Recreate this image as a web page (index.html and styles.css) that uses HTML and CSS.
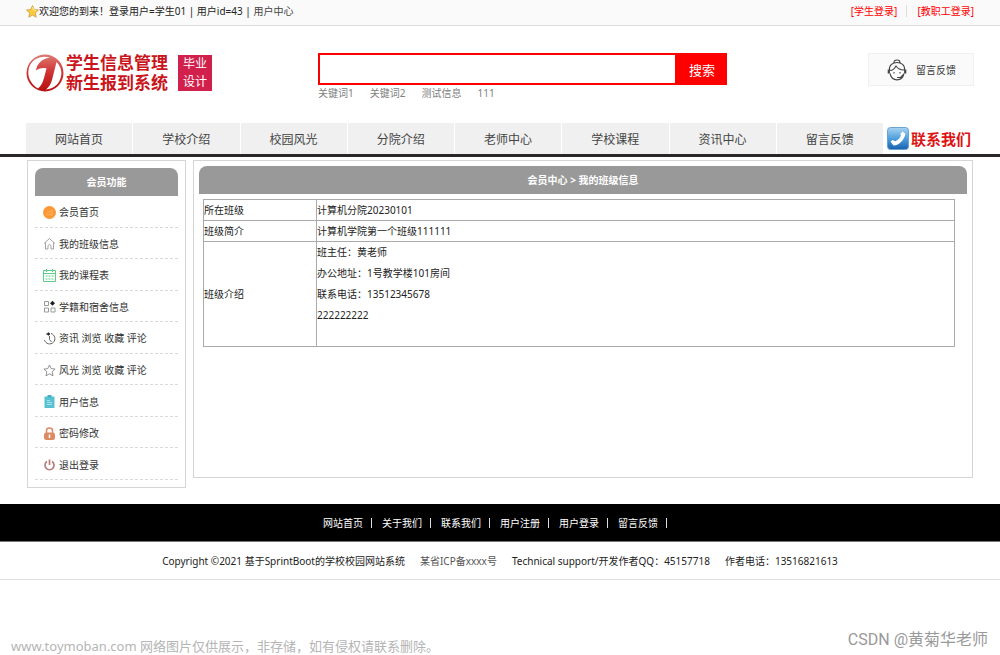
FILE: index.html
```html
<!DOCTYPE html>
<html lang="zh-CN">
<head>
<meta charset="utf-8">
<title>会员中心 - 我的班级信息</title>
<link rel="stylesheet" href="styles.css">
</head>
<body>
<div class="topbar">
  <div class="welcome">
    <svg class="star" viewBox="0 0 13 13"><path d="M6.5 .6l1.8 3.9 4.2.5-3.1 2.9.8 4.3-3.7-2.1-3.7 2.1.8-4.3L.5 5l4.2-.5z" fill="#fbcb3e" stroke="#c99a3c" stroke-width=".8"/><path d="M6.5 2l1 3.1 2.8.4" fill="none" stroke="#fff0a0"/></svg>
    <span>欢迎您的到来！登录用户=学生01 | 用户id=43 | <a href="#">用户中心</a></span>
  </div>
  <div class="logins"><a href="#">[学生登录]</a><a href="#">[教职工登录]</a></div>
</div>

<header class="header">
  <a class="logo" href="#">
    <svg class="logo-mark" viewBox="0 0 38 38">
      <defs><linearGradient id="red" x1="0" y1="0" x2="0" y2="1"><stop offset="0" stop-color="#dd7a74"/><stop offset=".5" stop-color="#cf3030"/><stop offset="1" stop-color="#b5100f"/></linearGradient></defs>
      <circle cx="19" cy="19" r="18.500" fill="url(#red)"/>
      <path d="M24 3.500C15 .8 5.500 5 3 13.500 .5 22 4.500 30 12 34.500 15 32 16.500 29 18 24L20.500 14.500C17 13.500 14 14 10 16.500 11 10 15 5 24 3.500Z" fill="#fff"/>
      <path d="M30.500 8C37 14 37 24 31 30.500 28 33.500 24 35 20 35.500 23 33 25 30 26 26Z" fill="#fff"/>
    </svg>
    <span class="logo-text"><span>学生信息管理</span><span>新生报到系统</span></span>
    <span class="logo-badge"><span>毕业</span><span>设计</span></span>
  </a>
  <div class="search">
    <form class="search-form">
      <input class="search-input" type="text" aria-label="搜索内容">
      <button class="search-button" type="button">搜索</button>
    </form>
    <div class="keywords"><a href="#">关键词1</a><a href="#">关键词2</a><a href="#">测试信息</a><a href="#">111</a></div>
  </div>
  <a class="feedback" href="#">
    <svg class="agent" viewBox="0 0 20 22" fill="none" stroke="#444" stroke-width="1.100"><path d="M7 3.500C7 .2 13 .2 13 3.500M2.500 11C1 1 19 1 17.500 11M3 14.500C5 23 15 23 17 14.500M3 11.500c2.500 0 5-2.500 6-4.500 2 3 4.500 4 8 4M10 18.500h3.500l3-3"/><path d="M1.800 10.500v4M18.200 10.500v4" stroke-width="2.200"/><path d="M7 13v1.500M13 13v1.500"/></svg>
    <span>留言反馈</span>
  </a>
</header>

<nav class="nav">
  <a class="nav-item" href="#">网站首页</a>
  <a class="nav-item" href="#">学校介绍</a>
  <a class="nav-item" href="#">校园风光</a>
  <a class="nav-item" href="#">分院介绍</a>
  <a class="nav-item" href="#">老师中心</a>
  <a class="nav-item" href="#">学校课程</a>
  <a class="nav-item" href="#">资讯中心</a>
  <a class="nav-item" href="#">留言反馈</a>
  <a class="contact" href="#">
    <svg class="phone" viewBox="0 0 22 23"><defs><linearGradient id="blue" x1="0" y1="0" x2="0" y2="1"><stop offset="0" stop-color="#a9d4f2"/><stop offset=".5" stop-color="#4f9fdc"/><stop offset="1" stop-color="#1761ae"/></linearGradient></defs><rect x=".5" y=".5" width="21" height="22" rx="3" fill="url(#blue)" stroke="#6ba3d0"/><path d="M15.500 4.500l2.800 2.200C17.500 12.500 12.500 18.500 6.500 18.500L3.500 14.500l2-1.500 3 1.200C11 13 13.500 10.500 14 8.500l-.8-1.600z" fill="#fff"/></svg>
    <span>联系我们</span>
  </a>
</nav>

<div class="content">
  <aside class="sidebar">
    <h2 class="panel-title">会员功能</h2>
    <ul class="menu">
      <li><a href="#"><svg class="icon" viewBox="0 0 13 13"><circle cx="6.500" cy="6.500" r="6.500" fill="#fb9834"/><path d="M3.500 7.500L9 4v5.500L6 8M5 8v1.500" fill="none" stroke="#ffb564"/></svg>会员首页</a></li>
      <li><a href="#"><svg class="icon" viewBox="0 0 13 13" fill="none" stroke="#999" stroke-width=".9"><path d="M1 6.500l5.500-5 5.500 5M2.500 5.500V12H5V8.500Q6.500 6.500 8 8.500V12h2.500V5.500"/></svg>我的班级信息</a></li>
      <li><a href="#"><svg class="icon" viewBox="0 0 13 13" fill="none" stroke="#5ecb8b"><path d="M.5 1.500h12v11H.5zM.5 4.500h12M3.500 0v3M9.500 0v3"/><path d="M2.500 7h8M2.500 10h8" stroke-dasharray="2 1"/></svg>我的课程表</a></li>
      <li><a href="#"><svg class="icon" viewBox="0 0 13 13" fill="none" stroke="#999"><path d="M1.500 1.500h4v4h-4zM1.500 8h4v4h-4zM8 8h4v4H8z"/><path d="M9.500 .8L12 3.300 9.500 5.800 7 3.300z" fill="#222" stroke="none"/></svg>学籍和宿舍信息</a></li>
      <li><a href="#"><svg class="icon" viewBox="0 0 13 13" fill="none" stroke="#666"><path d="M8 1.500A5.300 5.300 0 1 1 1.500 8M6.500 4v3.500L8.500 10"/><path d="M3.500 2H7M5.500 .5v3" stroke="#222" stroke-width="1.300"/></svg>资讯 浏览 收藏 评论</a></li>
      <li><a href="#"><svg class="icon" viewBox="0 0 13 13"><path d="M6.500 1l1.700 3.600 3.900.5-2.900 2.700.8 4-3.500-2-3.500 2 .8-4L.9 5.100l3.900-.5z" fill="none" stroke="#777" stroke-width=".8"/></svg>风光 浏览 收藏 评论</a></li>
      <li><a href="#"><svg class="icon" viewBox="0 0 13 13"><path d="M1.500 1.500h10V13h-10z" fill="#58c2d2"/><path d="M4.500 0h4v2.500h-4z" fill="#4baec0"/><path d="M4 5.500h3M4 7.500h5M4 9.500h5" stroke="#a8e3ea"/></svg>用户信息</a></li>
      <li><a href="#"><svg class="icon" viewBox="0 0 13 13"><path d="M3.500 6V3.500q0-2.500 3-2.500t3 2.500V6" fill="none" stroke="#dc8a62" stroke-width="1.500"/><rect x="1" y="5.500" width="11" height="7.500" rx="2.500" fill="#dc8a62"/><path d="M6.500 7.500v3.500" stroke="#fff" stroke-width="1.500"/></svg>密码修改</a></li>
      <li><a href="#"><svg class="icon" viewBox="0 0 13 13" fill="none" stroke="#b97b7d" stroke-width="1.700"><path d="M4 3.500a4.500 4.500 0 1 0 5 0M6.500 1.500V7"/></svg>退出登录</a></li>
    </ul>
  </aside>
  <main class="main">
    <h1 class="panel-title">会员中心 &gt; 我的班级信息</h1>
    <table class="info">
      <tr><th scope="row">所在班级</th><td>计算机分院20230101</td></tr>
      <tr><th scope="row">班级简介</th><td>计算机学院第一个班级111111</td></tr>
      <tr><th scope="row">班级介绍</th><td class="detail">班主任：黄老师<br>办公地址：1号教学楼101房间<br>联系电话：13512345678<br>222222222</td></tr>
    </table>
  </main>
</div>

<footer>
  <div class="footer-links"><a href="#">网站首页</a><i></i><a href="#">关于我们</a><i></i><a href="#">联系我们</a><i></i><a href="#">用户注册</a><i></i><a href="#">用户登录</a><i></i><a href="#">留言反馈</a><i></i></div>
  <div class="copyright"><span>Copyright ©2021 基于SprintBoot的学校校园网站系统</span><a href="#">某省ICP备xxxx号</a><span>Technical support/开发作者QQ：45157718</span><span>作者电话：13516821613</span></div>
  <div class="notes"><span class="source">www.toymoban.com 网络图片仅供展示，非存储，如有侵权请联系删除。</span><span class="author">CSDN @黄菊华老师</span></div>
</footer>
</body>
</html>
```
FILE: styles.css
```css
* { box-sizing: border-box; }
body {
  margin: 0;
  background: #fff;
  color: #222;
  font: 10px/20px "Noto Sans", "Noto Sans CJK SC", sans-serif;
}
a { color: inherit; text-decoration: none; }
svg { display: block; flex: none; }

.topbar {
  display: flex;
  justify-content: space-between;
  align-items: center;
  height: 26px;
  padding: 0 26px;
  background: #fafafa;
  border-bottom: 1px solid #ddd;
}
.welcome { display: flex; align-items: center; padding-bottom: 3px; }
.welcome a { color: #444; }
.star { width: 13px; height: 13px; }
.logins { display: flex; align-items: center; color: #f00; line-height: 12px; padding-bottom: 3px; }
.logins a + a { margin-left: 9px; padding-left: 10px; border-left: 1px solid #ddd; }

.header {
  display: flex;
  align-items: flex-start;
  height: 97px;
  padding: 27px 26px 0;
}
.logo { display: flex; align-items: center; width: 292px; }
.logo-mark { width: 38px; height: 38px; margin-right: 2px; }
.logo-text { display: grid; color: #c9151b; font-size: 17px; font-weight: 700; line-height: 20px; }
.logo-badge {
  display: grid;
  margin-left: 10px;
  padding: 0 5px;
  background: #d2204c;
  color: #fff;
  font-size: 12px;
  line-height: 18px;
}
.search { width: 409px; }
.search-form { display: flex; height: 32px; }
.search-input { flex: 1; min-width: 0; border: 2px solid #f00; padding: 0 8px; outline: none; }
.search-button { width: 50px; padding: 0; border: 0; background: #f00; color: #fff; font: 13px "Noto Sans CJK SC", sans-serif; }
.keywords { display: flex; gap: 16px; color: #808080; line-height: 16px; }
.feedback {
  display: flex;
  align-items: center;
  gap: 9px;
  margin-left: auto;
  width: 106px;
  height: 33px;
  padding-left: 18px;
  border: 1px solid #f0f0f0;
  background: #fafafa;
  color: #333;
}
.agent { width: 20px; height: 22px; }

.nav {
  display: flex;
  height: 34px;
  padding: 0 26px;
  border-bottom: 3px solid #2a2729;
}
.nav-item {
  flex: 1;
  border-right: 1px solid #fff;
  background: #f0f0f0;
  color: #444;
  font-size: 12px;
  line-height: 33px;
  text-align: center;
}
.contact { display: flex; align-items: center; gap: 2px; width: 90px; padding-left: 3px; color: #dc1414; font-size: 15px; font-weight: 700; }
.phone { width: 22px; height: 23px; }

.content { display: flex; align-items: flex-start; gap: 7px; padding: 3px 27px 16px; }
.sidebar { width: 159px; padding: 7px; border: 1px solid #d5d5d5; }
.main { flex: 1; min-height: 318px; padding: 5px; border: 1px solid #d5d5d5; }
.panel-title {
  margin: 0;
  border-radius: 8px 8px 0 0;
  background: #999;
  color: #fff;
  font-size: 10px;
  font-weight: 700;
  line-height: 28px;
  text-align: center;
}
.menu { display: grid; grid-auto-rows: 1fr; min-height: 284px; margin: 0; padding: 0; list-style: none; }
.menu li { display: flex; align-items: center; padding: 2px 0 0 8px; border-bottom: 1px dashed #d9d9d9; }
.menu a { display: flex; align-items: center; gap: 3px; color: #333; }
.icon { width: 13px; height: 13px; }

.info { width: calc(100% - 16px); margin: 5px 0 0 4px; border-collapse: collapse; line-height: 20px; }
.info th, .info td { padding: 0; border: 1px solid #aaa; text-align: left; font-weight: 400; }
.info th { width: 113px; }
.info .detail { padding-bottom: 20px; line-height: 21px; }

.footer-links {
  display: flex;
  justify-content: center;
  align-items: center;
  height: 38px;
  background: #000;
  border-bottom: 1px solid #777;
  color: #fff;
}
.footer-links i { width: 1px; height: 10px; margin: 0 10px 0 8px; background: #ddd; }
.copyright { display: flex; justify-content: center; gap: 15px; padding: 9px 0 8px; border-bottom: 1px solid #e0e0e0; }
.copyright a { color: #555; }
.notes { display: flex; justify-content: space-between; padding: 48px 12px 0 11px; }
.source { padding-top: 8px; color: #b5b5b5; font-size: 13px; }
.author { color: #999; font-family: Roboto, "Noto Sans CJK SC", sans-serif; font-size: 16px; line-height: 24px; }
```
